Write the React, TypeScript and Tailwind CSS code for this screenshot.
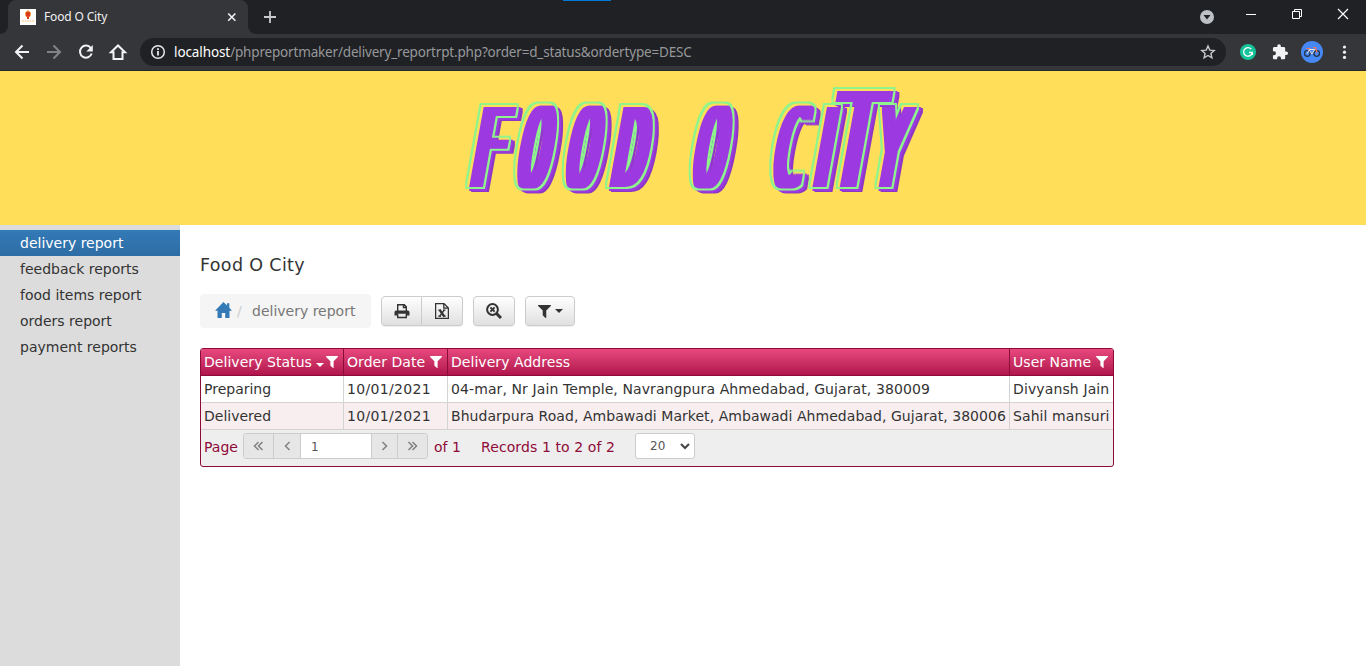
import React from "react";

const filterPath =
  "M1595 295q17 41-14 70l-493 493v742q0 42-39 59-13 5-25 5-27 0-45-19l-256-256q-19-19-19-45v-486l-493-493q-31-29-14-70 17-39 59-39h1280q42 0 59 39z";

function Funnel({ className }: { className?: string }) {
  return (
    <svg viewBox="192 256 1408 1408" className={className} fill="currentColor">
      <path d={filterPath} />
    </svg>
  );
}

function TabStrip() {
  return (
    <div className="flex h-[34px] bg-[#202124]">
      <div className="flex w-2 items-end bg-[#35363a]">
        <div className="h-full w-full rounded-br-lg bg-[#202124]" />
      </div>
      <div className="flex w-60 items-center rounded-t-lg bg-[#35363a] pl-3">
        <svg width="16" height="16" viewBox="0 0 16 16">
          <path fill="#fff" d="M0 0h16v16H0z" />
          <path fill="#f58a2c" d="M8 1 11 4 10.500 7 8 9.500 5.500 7 5 4z" />
          <path fill="#d83a1e" d="M6 3h4v4l-2 1-2-1zM7 8h2v2H7z" />
          <path stroke="#f9c37c" d="M2 12h12" strokeDasharray="2 .5" />
        </svg>
        <span className="ml-2 w-[180px] text-[12px] leading-4 tracking-[-0.15px] text-[#f1f1f1]">Food O City</span>
        <svg width="16" height="16" viewBox="0 0 16 16" stroke="#f1f1f1" strokeWidth="1.6">
          <path d="m4.200 4.500 7.200 7.200M11.400 4.500l-7.200 7.200" />
        </svg>
      </div>
      <div className="flex w-2 bg-[#35363a]">
        <div className="h-full w-full rounded-bl-lg bg-[#202124]" />
      </div>
      <svg className="ml-[6px] mt-[9px]" width="16" height="16" viewBox="0 0 16 16" stroke="#c9cacc" strokeWidth="1.800">
        <path d="M8 2v12M2 8h12" />
      </svg>
      <div className="ml-[285px] h-[1px] w-12 bg-[#0078d7]" />
      <div className="flex-1" />
      <svg width="166" height="34" viewBox="1200 0 166 34">
        <circle cx="1207" cy="17" r="7" fill="#bdc1c6" />
        <path d="M1203.500 15h7l-3.500 4.500z" fill="#202124" />
        <g stroke="#fff" strokeWidth="1" fill="none">
          <path d="M1246 14.500h10" />
          <path d="M1292.500 11.500h7v7h-7zM1294.500 11.500v-2h7v7h-2" />
          <path d="m1338 9 10 10M1348 9l-10 10" strokeWidth="1.200" />
        </g>
      </svg>
    </div>
  );
}

function Toolbar() {
  return (
    <div className="flex h-[37px] items-center border-b border-[#27282b] bg-[#35363a]">
      <svg width="140" height="36" viewBox="0 34 140 36" fill="none" stroke="#f1f3f4" strokeWidth="2">
        <path d="M29 52H16M22.500 45.500 16 52l6.500 6.500" />
        <path d="M47 52h13M53.500 45.500 60 52l-6.500 6.500" stroke="#828386" />
        <path d="M90.800 48a6 6 0 1 0 .9 5.500" />
        <path d="M92.800 45v6.500h-6.500z" fill="#f1f3f4" stroke="none" />
        <path d="M111 52.300h2.500V59h9v-6.700h2.500L118 45.500z" />
      </svg>
      <div className="flex h-7 w-[1086px] items-center rounded-full bg-[#202124] pl-[10px]">
        <svg width="16" height="16" viewBox="0 0 16 16" fill="none" stroke="#e8eaed" strokeWidth="1.500">
          <circle cx="8" cy="8" r="6.300" />
          <path d="M8 7v4.500M8 4.300V6" strokeWidth="1.800" />
        </svg>
        <span className="ml-2 w-[1026px] whitespace-nowrap text-[13.5px] leading-5 tracking-[-0.175px] text-[#96989b]">
          <span className="tracking-[-0.1px] text-white">localhost</span>/phpreportmaker/delivery_reportrpt.php?order=d_status&amp;ordertype=DESC
        </span>
        <svg width="16" height="16" viewBox="0 0 16 16" fill="none" stroke="#c8cacd" strokeWidth="1.400">
          <path d="m8 2 1.800 4.100 4.400.4-3.300 2.900 1 4.400L8 11.500l-3.900 2.300 1-4.400-3.300-2.900 4.400-.4z" />
        </svg>
      </div>
      <svg width="140" height="36" viewBox="1226 34 140 36">
        <circle cx="1248" cy="52" r="8" fill="#15c39a" />
        <path d="M1251.300 49.200a4.300 4.300 0 1 0 .9 3.300h-3.200M1252.300 52v3" fill="none" stroke="#fff" strokeWidth="1.300" />
        <g transform="translate(1271.500 43.500) scale(.72)">
          <path fill="#f1f3f4" d="M20.500 11H19V7c0-1.100-.9-2-2-2h-4V3.500a2.500 2.500 0 0 0-5 0V5H4c-1.100 0-2 .9-2 2v3.800h1.500a2.700 2.700 0 0 1 0 5.400H2V20c0 1.100.9 2 2 2h3.800v-1.500a2.700 2.700 0 0 1 5.400 0V22H17c1.100 0 2-.9 2-2v-4h1.500a2.500 2.500 0 0 0 0-5z" />
        </g>
        <circle cx="1312" cy="52" r="11" fill="#4688f6" />
        <g fill="none" strokeWidth="1.300">
          <circle cx="1307.300" cy="53.500" r="2.800" stroke="#25344b" />
          <circle cx="1316.700" cy="53.500" r="2.800" stroke="#25344b" />
          <path d="m1307.300 53.500 2-4h5.500l-3 4.500-2.500-4" stroke="#e6e2dc" strokeWidth="1" />
          <path d="M1306.500 48.500h4M1313 47.500h2.500l1.500 5" stroke="#ff7355" strokeWidth="1.200" />
        </g>
        <g fill="#f1f3f4">
          <circle cx="1344.500" cy="47" r="1.600" />
          <circle cx="1344.500" cy="52.200" r="1.600" />
          <circle cx="1344.500" cy="57.400" r="1.600" />
        </g>
      </svg>
    </div>
  );
}

type Letter = { ch: string; x: number; w: number; h: number; ink: [number, number]; sans?: boolean };

/* x and w are the upright left edge and width before thickening; ink is the glyph's extent in font units */
const letters: Letter[] = [
  { ch: "F", x: 471, w: 26, h: 80, ink: [197, 1108] },
  { ch: "O", x: 515.5, w: 27, h: 80, ink: [102, 1130] },
  { ch: "O", x: 564, w: 27, h: 80, ink: [102, 1130] },
  { ch: "D", x: 612, w: 27, h: 80, ink: [133, 1122] },
  { ch: "O", x: 691, w: 27, h: 80, ink: [102, 1130] },
  { ch: "C", x: 770.5, w: 26, h: 80, ink: [109, 1112] },
  { ch: "I", x: 815.5, w: 6, h: 80, ink: [201, 403], sans: true },
  { ch: "T", x: 823, w: 48, h: 96, ink: [47, 1186] },
  { ch: "Y", x: 870, w: 28, h: 80, ink: [20, 1214] },
];

function Lettering({ filter }: { filter: string }) {
  return (
    <>
      {letters.map((l, i) => {
        const sx = (l.w / (l.ink[1] - l.ink[0])) * 20.48;
        const sy = l.h / 72.9;
        return (
          <g key={i} filter={filter}>
            <text
              fontSize="100"
              fontFamily={l.sans ? "DejaVu Sans" : "DejaVu Sans Mono"}
              transform={`translate(${l.x} 186) skewX(-10.3) scale(${sx} ${sy}) translate(${-l.ink[0] / 20.48} 0)`}
            >
              {l.ch}
            </text>
          </g>
        );
      })}
    </>
  );
}

function Banner() {
  return (
    <div className="h-[154px] bg-[#ffde59]">
      <svg width="1366" height="154" viewBox="0 71 1366 154">
        <defs>
          <filter id="heavy" filterUnits="userSpaceOnUse" x="440" y="75" width="520" height="140" colorInterpolationFilters="sRGB">
            <feMorphology operator="dilate" radius="6 2" />
          </filter>
          <filter id="rim" filterUnits="userSpaceOnUse" x="440" y="75" width="520" height="140" colorInterpolationFilters="sRGB">
            <feMorphology in="SourceGraphic" operator="dilate" radius="7 3" result="outer" />
            <feMorphology in="SourceGraphic" operator="dilate" radius="5 1" result="inner" />
            <feComposite in="outer" in2="inner" operator="out" />
          </filter>
        </defs>
        <g fill="#8d38c4" transform="translate(5 4)"><Lettering filter="url(#heavy)" /></g>
        <g fill="#9d39e0" transform="translate(3 3)"><Lettering filter="url(#heavy)" /></g>
        <g fill="#8df58c"><Lettering filter="url(#rim)" /></g>
      </svg>
    </div>
  );
}

function Sidebar() {
  const items = ["feedback reports", "food items report", "orders report", "payment reports"];
  return (
    <nav className="w-[180px] bg-[#dcdcdc] pt-[5px] text-[14px] leading-[26px]">
      <div className="h-[26px] bg-linear-to-b from-[#337ab7] to-[#2e6da4] pl-5 text-white">delivery report</div>
      {items.map((t) => (
        <div key={t} className="h-[26px] pl-5 text-[#333]">{t}</div>
      ))}
    </nav>
  );
}

const button = "flex h-[30px] items-center justify-center border border-[#ccc] bg-linear-to-b from-white to-[#e0e0e0] shadow-[0_1px_1px_#0001]";

function Actions() {
  return (
    <div className="mt-4 flex h-[34px] items-center">
      <div className="flex h-[34px] w-[171px] items-center rounded bg-[#f5f5f5] pl-[15px] text-[#777]">
        <svg className="mb-[3px]" width="17" height="16" viewBox="0 0 17 16" fill="#337ab7">
          <path d="M8.500 0 12 3.500V1.200h2.300v4.600L17 8.700h-2.500V16h-4.300v-5H6.800v5H2.500V8.700H0z" />
        </svg>
        <span className="ml-[5px] w-[15px] text-[#ccc]">/</span>
        <span>delivery report</span>
      </div>
      <div className={`${button} ml-[10px] w-[41px] rounded-l`}>
        <svg width="16" height="16" viewBox="0 0 16 16" fill="none" stroke="#333">
          <path d="M3.700 8V1.700h6.600l2 2V8M9.500 1.700v2.800h2.800" strokeWidth="1.400" />
          <path d="M.5 12.500V9.300Q.5 7.500 2.300 7.500h11.400q1.800 0 1.800 1.800v3.200h-3v-1.800h-9v1.800z" fill="#333" stroke="none" />
          <path d="M3.700 10.700v3.800h8.600v-3.800" strokeWidth="1.400" />
        </svg>
      </div>
      <div className={`${button} w-[41px] rounded-r border-l-0`}>
        <svg width="14" height="16" viewBox="0 0 14 16" fill="none" stroke="#333" strokeWidth="1.300">
          <path d="M.6.600h8.400L13.400 5v10.400H.6zM8.800.600V5.200h4.600" />
          <path d="m4.700 7 4.600 6.500" strokeWidth="2.200" />
          <path d="m9.200 7-4.600 6.500" strokeWidth="1.300" />
          <path d="M3.300 7.200H6M8 7.200h2.500M3.300 13.200H6M8 13.200h2.700" />
        </svg>
      </div>
      <div className={`${button} ml-[10px] w-[42px] rounded`}>
        <svg width="16" height="16" viewBox="0 0 16 16" fill="none" stroke="#333">
          <circle cx="6.500" cy="6.500" r="5.400" strokeWidth="2" />
          <path d="m10.500 10.500 4.500 4.500" strokeWidth="3" />
          <path d="m4.400 4.400 4.200 4.200M8.600 4.400l-4.200 4.200" strokeWidth="1.900" />
        </svg>
      </div>
      <div className={`${button} ml-[10px] w-[50px] gap-1 rounded text-[#333]`}>
        <Funnel className="mt-[1px] h-[13px] w-[13px]" />
        <svg width="8" height="4" viewBox="0 0 8 4" fill="#333"><path d="M0 0h8L4 4z" /></svg>
      </div>
    </div>
  );
}

const headCell = "flex h-[27px] items-center whitespace-nowrap border-b border-[#8e0a38] bg-linear-to-b from-[#e8487f] to-[#b0154c] pl-[3px] tracking-[0.05px] text-white";
const rowA = "h-[27px] overflow-hidden whitespace-nowrap border-b border-[#d3d3d3] bg-white pl-[3px] leading-[26px]";
const rowB = "h-[27px] overflow-hidden whitespace-nowrap border-b border-[#d3d3d3] bg-[#f8eeef] pl-[3px] leading-[26px]";
const pageButton = "flex h-full items-center justify-center border-r border-[#ccc] bg-[#e6e6e6]";

function Chevrons({ d }: { d: string }) {
  return (
    <svg width="11" height="10" viewBox="0 0 11 10" fill="none" stroke="#808080" strokeWidth="1.500">
      <path d={d} />
    </svg>
  );
}

function Report() {
  return (
    <div className="mt-5 w-[914px] overflow-hidden rounded-[3px] border border-[#8e0a38] bg-[#eee] text-[#333]">
      <div className="grid grid-cols-[143px_104px_562px_103px]">
        <div className={`${headCell} border-r`}>
          <span className="w-[112px]">Delivery Status</span>
          <svg className="mt-[5px]" width="8" height="4" viewBox="0 0 8 4" fill="#fff"><path d="M0 0h8L4 4z" /></svg>
          <Funnel className="ml-[2px] h-3 w-3" />
        </div>
        <div className={`${headCell} border-r`}>
          <span className="w-[83px]">Order Date</span>
          <Funnel className="h-3 w-3" />
        </div>
        <div className={`${headCell} border-r`}>Delivery Address</div>
        <div className={headCell}>
          <span className="w-[83px]">User Name</span>
          <Funnel className="h-3 w-3" />
        </div>
        <div className={`${rowA} border-r`}>Preparing</div>
        <div className={`${rowA} border-r tracking-[0.32px]`}>10/01/2021</div>
        <div className={`${rowA} border-r tracking-[0.1px]`}>04-mar, Nr Jain Temple, Navrangpura Ahmedabad, Gujarat, 380009</div>
        <div className={`${rowA} tracking-[0.12px]`}>Divyansh Jain</div>
        <div className={`${rowB} border-r`}>Delivered</div>
        <div className={`${rowB} border-r tracking-[0.32px]`}>10/01/2021</div>
        <div className={`${rowB} border-r tracking-[0.045px]`}>Bhudarpura Road, Ambawadi Market, Ambawadi Ahmedabad, Gujarat, 380006</div>
        <div className={`${rowB} tracking-[0.08px]`}>Sahil mansuri</div>
      </div>
      <div className="flex h-9 items-start whitespace-nowrap pl-[3px] pt-[3px] leading-[29px] text-[#8e0a38]">
        <span className="w-[39px]">Page</span>
        <div className="flex h-[26px] w-[185px] overflow-hidden rounded-[3px] border border-[#ccc]">
          <div className={`${pageButton} w-[30px]`}><Chevrons d="M5.500 1 1.500 5l4 4M9.500 1l-4 4 4 4" /></div>
          <div className={`${pageButton} w-[27px]`}><Chevrons d="M7.500 1l-4 4 4 4" /></div>
          <div className="h-full w-[71px] border-r border-[#ccc] bg-white pl-[10px] text-[12px] leading-[26px] text-[#555]">1</div>
          <div className={`${pageButton} w-[26px]`}><Chevrons d="m3.500 1 4 4-4 4" /></div>
          <div className="flex h-full flex-1 items-center justify-center bg-[#e6e6e6]"><Chevrons d="m1.500 1 4 4-4 4M5.500 1l4 4-4 4" /></div>
        </div>
        <span className="ml-[6px] w-[47px]">of 1</span>
        <span className="w-[154px] tracking-[0.1px]">Records 1 to 2 of 2</span>
        <div className="flex h-[26px] w-[60px] items-center rounded-[3px] border border-[#ccc] bg-white pl-[14px] text-[12px] text-[#555]">
          <span className="mt-px w-[30px]">20</span>
          <svg width="10" height="7" viewBox="0 0 10 7" fill="none" stroke="#444" strokeWidth="2"><path d="m1 1 4 4 4-4" /></svg>
        </div>
      </div>
    </div>
  );
}

export default function App() {
  return (
    <div className="flex h-[666px] w-[1366px] flex-col overflow-hidden bg-white">
      <header className="font-['Noto_Sans',sans-serif]">
        <TabStrip />
        <Toolbar />
      </header>
      <Banner />
      <div className="flex flex-1 font-[Verdana,'DejaVu_Sans',sans-serif] text-[14px]">
        <Sidebar />
        <main className="flex-1 pl-5 pt-7">
          <h1 className="h-[25px] text-[17.500px] leading-[25px] tracking-[0.35px] text-[#333]">Food O City</h1>
          <Actions />
          <Report />
        </main>
      </div>
    </div>
  );
}
